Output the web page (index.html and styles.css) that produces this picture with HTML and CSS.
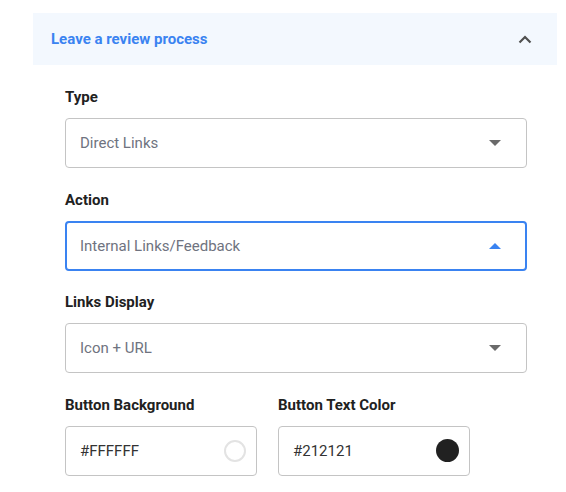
FILE: index.html
```html
<!DOCTYPE html>
<html>
<head>
<meta charset="utf-8">
<link rel="stylesheet" href="styles.css">
</head>
<body>
<div class="panel">
  <div class="header">
    <span class="title">Leave a review process</span>
    <svg class="chev" width="14" height="9" viewBox="0 0 14 9"><path d="M1.5 7.5 L7 2 L12.5 7.5" fill="none" stroke="#505050" stroke-width="2.2"/></svg>
  </div>
  <div class="form">
    <div class="field">
      <div class="label">Type</div>
      <div class="select"><span class="value">Direct Links</span><span class="tri down"></span></div>
    </div>
    <div class="field">
      <div class="label">Action</div>
      <div class="select focus"><span class="value">Internal Links/Feedback</span><span class="tri up"></span></div>
    </div>
    <div class="field">
      <div class="label">Links Display</div>
      <div class="select"><span class="value">Icon + URL</span><span class="tri down"></span></div>
    </div>
    <div class="row">
      <div class="field half">
        <div class="label">Button Background</div>
        <div class="select color"><span class="hex">#FFFFFF</span><span class="swatch white"></span></div>
      </div>
      <div class="field half">
        <div class="label">Button Text Color</div>
        <div class="select color"><span class="hex">#212121</span><span class="swatch dark"></span></div>
      </div>
    </div>
  </div>
</div>
</body>
</html>
```
FILE: styles.css
```css
html, body { margin: 0; padding: 0; background: #fff; }
body { font-family: Roboto, "Liberation Sans", Arial, sans-serif; }
.panel { padding: 13px 0 0 33px; width: 524px; }
.header {
  height: 52px;
  background: #f3f8fe;
  display: flex;
  align-items: center;
  justify-content: space-between;
  padding: 0 25px 0 18px;
}
.title { color: #3a83f1; font-weight: 700; font-size: 15px; }
.chev { display: block; margin-top: 1px; }
.form { padding: 22px 0 0 32px; width: 462px; }
.field { margin-bottom: 21.5px; }
.label { font-size: 15px; font-weight: 700; color: #212121; line-height: 20px; margin-bottom: 11px; }
.select {
  box-sizing: border-box;
  height: 50px;
  border: 1px solid #c4c4c4;
  border-radius: 4px;
  display: flex;
  align-items: center;
  justify-content: space-between;
  padding: 0 25px 0 14px;
}
.select.focus { border: 2px solid #3a83f1; padding: 0 24px 0 13px; }
.value { font-size: 15px; color: #6f7380; }
.tri { width: 0; height: 0; border-left: 6px solid transparent; border-right: 6px solid transparent; }
.tri.down { border-top: 6px solid #6a6a6a; }
.tri.up { border-bottom: 6px solid #3a83f1; }
.row { display: flex; gap: 21px; }
.half { width: 192px; }
.select.color { padding: 0 10px 0 14px; }
.hex { font-size: 15px; color: #333; }
.swatch { width: 22px; height: 22px; border-radius: 50%; box-sizing: border-box; }
.swatch.white { border: 2px solid #e3e3e3; background: #fff; }
.swatch.dark { background: #212121; width: 23px; height: 23px; }
```
